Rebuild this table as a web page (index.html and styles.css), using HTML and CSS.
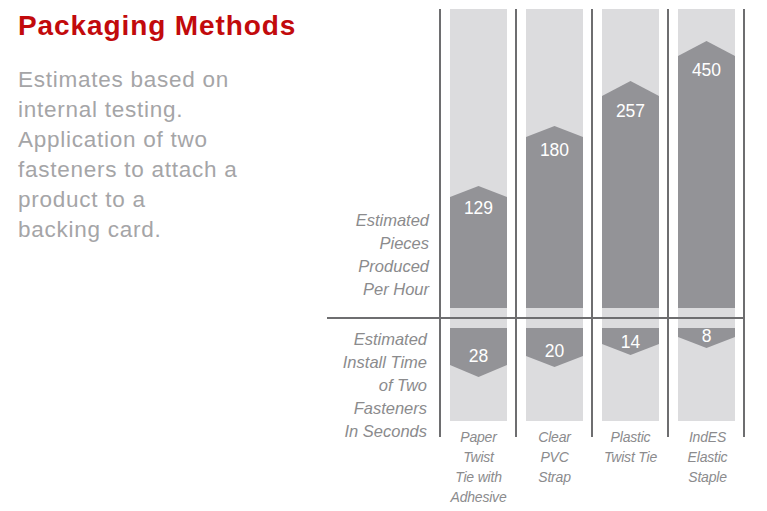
FILE: index.html
```html
<!DOCTYPE html>
<html lang="en">
<head>
<meta charset="utf-8">
<title>Packaging Methods</title>
<link rel="stylesheet" href="styles.css">
</head>
<body>
<div class="page">
  <section class="intro">
    <h1 class="title">Packaging Methods</h1>
    <p class="lede">Estimates based on<br>internal testing.<br>Application of two<br>fasteners to attach a<br>product to a<br>backing card.</p>
  </section>
  <section class="chart">
    <div class="axis-label upper-label">Estimated<br>Pieces<br>Produced<br>Per Hour</div>
    <div class="col up"><div class="track"><div class="fill up-fill" style="--h:122px;--c:11px;--t:12px"><span class="val">129</span></div></div></div>
    <div class="col up"><div class="track"><div class="fill up-fill" style="--h:182px;--c:11px;--t:14px"><span class="val">180</span></div></div></div>
    <div class="col up"><div class="track"><div class="fill up-fill" style="--h:227px;--c:15px;--t:20px"><span class="val">257</span></div></div></div>
    <div class="col up last"><div class="track"><div class="fill up-fill" style="--h:267px;--c:15px;--t:19px"><span class="val">450</span></div></div></div>

    <div class="axis-label lower-label">Estimated<br>Install Time<br>of Two<br>Fasteners<br>In Seconds</div>
    <div class="col low"><div class="track"><div class="fill down-fill" style="--h:49px;--c:12px;--t:18px"><span class="val">28</span></div></div></div>
    <div class="col low"><div class="track"><div class="fill down-fill" style="--h:39px;--c:11px;--t:13px"><span class="val">20</span></div></div></div>
    <div class="col low"><div class="track"><div class="fill down-fill" style="--h:27px;--c:11px;--t:4px"><span class="val">14</span></div></div></div>
    <div class="col low last"><div class="track"><div class="fill down-fill" style="--h:20px;--c:11px;--t:-2px"><span class="val">8</span></div></div></div>

    <div class="name-spacer"></div>
    <div class="name">Paper<br>Twist<br>Tie with<br>Adhesive</div>
    <div class="name">Clear<br>PVC<br>Strap</div>
    <div class="name">Plastic<br>Twist Tie</div>
    <div class="name">IndES<br>Elastic<br>Staple</div>
  </section>
</div>
</body>
</html>
```
FILE: styles.css
```css
html, body {
  margin: 0;
  padding: 0;
  background: #ffffff;
}

body {
  font-family: "Liberation Sans", Arial, Helvetica, sans-serif;
  width: 767px;
  height: 511px;
  overflow: hidden;
}

.page {
  display: flex;
  align-items: flex-start;
}

.intro {
  width: 327px;
  box-sizing: border-box;
  padding-left: 18px;
  padding-top: 10px;
}

.title {
  margin: 0;
  font-size: 28px;
  line-height: 32px;
  font-weight: 700;
  letter-spacing: 0.9px;
  color: #c20a0c;
}

.lede {
  margin: 23px 0 0;
  font-size: 22.5px;
  line-height: 30px;
  letter-spacing: 0.75px;
  color: #a5a5a7;
}

.chart {
  margin-top: 9px;
  display: grid;
  grid-template-columns: 112px 76px 76px 76px 78px;
  grid-template-rows: 308px 120px auto;
}

.axis-label,
.name {
  font-style: italic;
  color: #8b8b8d;
}

.axis-label {
  text-align: right;
  font-size: 16.5px;
  line-height: 23px;
}

.upper-label {
  align-self: end;
  padding: 0 10px 16px 0;
}

.lower-label {
  border-top: 2px solid #6e6e70;
  padding: 9px 12px 0 0;
  white-space: nowrap;
}

.col {
  border-left: 2px solid #6e6e70;
  padding: 0 8px 0 9px;
}

.col.last {
  border-right: 2px solid #6e6e70;
}

.col.low {
  border-top: 2px solid #6e6e70;
}

.track {
  background: #dcdcde;
  box-sizing: border-box;
  display: flex;
  flex-direction: column;
}

.up .track {
  height: 100%;
  justify-content: flex-end;
  padding-bottom: 9px;
}

.low .track {
  height: 102px;
  padding-top: 9px;
}

.fill {
  height: var(--h);
  background: #939397;
  display: flex;
  flex-direction: column;
  align-items: center;
}

.up-fill {
  clip-path: polygon(0 var(--c), 50% 0, 100% var(--c), 100% 100%, 0 100%);
}

.down-fill {
  clip-path: polygon(0 0, 100% 0, 100% calc(100% - var(--c)), 50% 100%, 0 calc(100% - var(--c)));
}

.val {
  display: block;
  margin-top: var(--t);
  color: #ffffff;
  font-size: 17.5px;
  line-height: 20px;
}

.name {
  margin-top: -10px;
  padding: 0 8px 0 11px;
  text-align: center;
  font-size: 14px;
  line-height: 20px;
  letter-spacing: -0.2px;
  white-space: nowrap;
}
```
